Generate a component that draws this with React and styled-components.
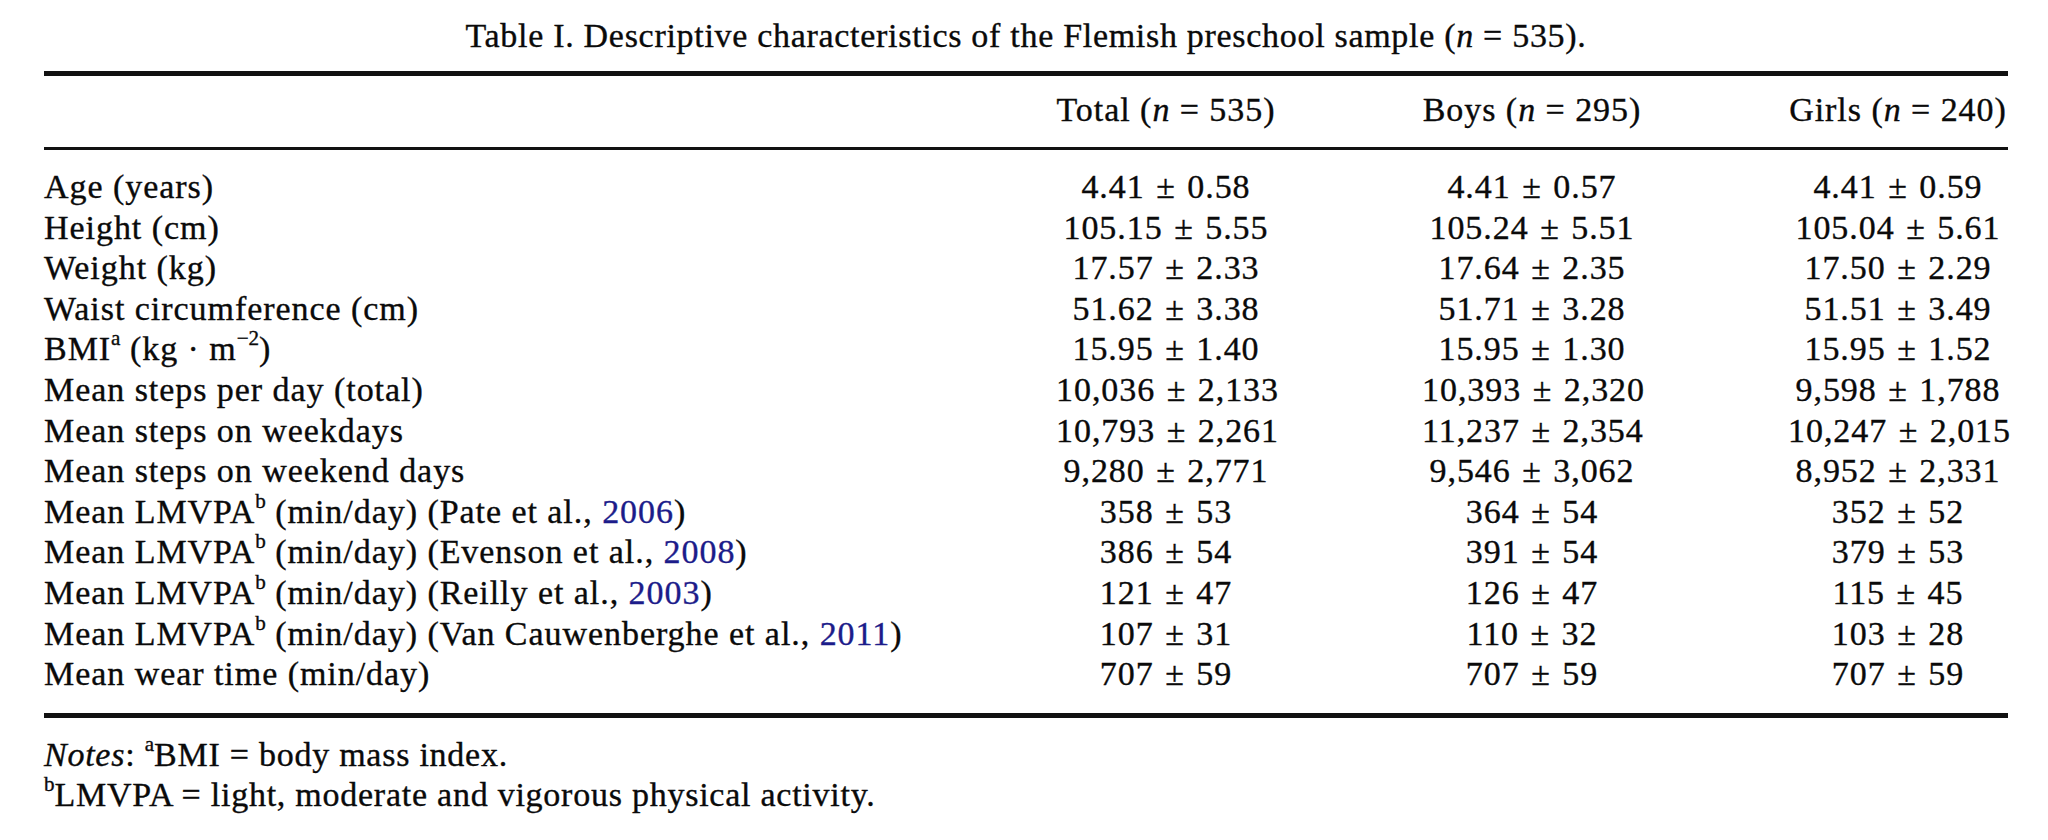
import styled, { createGlobalStyle } from 'styled-components';

const GlobalStyle = createGlobalStyle`
  html, body {
    margin: 0;
    padding: 0;
    background: #ffffff;
  }
  body {
    font-family: 'Liberation Serif', 'Times New Roman', serif;
    color: #0a0a0a;
    -webkit-text-stroke: 0.35px #0a0a0a;
  }
`;

const Page = styled.main`
  width: 2048px;
  box-sizing: border-box;
  padding: 16px 40px 0 44px;
  font-size: 34px;
  letter-spacing: 0.95px;
`;

const Caption = styled.h1`
  margin: 0 0 15px 0;
  font-size: 34px;
  font-weight: 400;
  line-height: 40px;
  letter-spacing: 0.7px;
  text-align: center;
  white-space: nowrap;
`;

const TableHead = styled.div`
  border-top: 5px solid #111;
  border-bottom: 3px solid #111;
  padding: 14px 0 17px 0;
`;

const TableBody = styled.div`
  border-bottom: 5px solid #111;
  padding: 17px 0 18px 0;
`;

const Row = styled.div`
  display: grid;
  grid-template-columns: 1fr 220px 220px 220px;
  column-gap: 146px;
  line-height: ${(p) => (p.$head ? '40px' : '40.6px')};
`;

const Label = styled.div`
  white-space: nowrap;
`;

const Value = styled.div`
  text-align: center;
  white-space: nowrap;
`;

const PlusMinus = styled.span`
  margin: 0 2px;
`;

const Sup = styled.sup`
  font-size: 0.62em;
  line-height: 0;
  vertical-align: 0.7em;
  letter-spacing: 0;
`;

const Year = styled.span`
  color: #1c1c8a;
  -webkit-text-stroke: 0.35px #1c1c8a;
`;

const Notes = styled.div`
  margin-top: 17px;
  line-height: 40px;
  letter-spacing: 0.75px;
`;

const lm = (who, year) => (
  <>
    Mean LMVPA<Sup>b</Sup> (min/day) ({who}, <Year>{year}</Year>)
  </>
);

const rows = [
  ['Age (years)', '4.41 ± 0.58', '4.41 ± 0.57', '4.41 ± 0.59'],
  ['Height (cm)', '105.15 ± 5.55', '105.24 ± 5.51', '105.04 ± 5.61'],
  ['Weight (kg)', '17.57 ± 2.33', '17.64 ± 2.35', '17.50 ± 2.29'],
  ['Waist circumference (cm)', '51.62 ± 3.38', '51.71 ± 3.28', '51.51 ± 3.49'],
  [
    <>
      BMI<Sup>a</Sup> (kg · m<Sup>−2</Sup>)
    </>,
    '15.95 ± 1.40',
    '15.95 ± 1.30',
    '15.95 ± 1.52',
  ],
  ['Mean steps per day (total)', '10,036 ± 2,133', '10,393 ± 2,320', '9,598 ± 1,788'],
  ['Mean steps on weekdays', '10,793 ± 2,261', '11,237 ± 2,354', '10,247 ± 2,015'],
  ['Mean steps on weekend days', '9,280 ± 2,771', '9,546 ± 3,062', '8,952 ± 2,331'],
  [lm('Pate et al.', '2006'), '358 ± 53', '364 ± 54', '352 ± 52'],
  [lm('Evenson et al.', '2008'), '386 ± 54', '391 ± 54', '379 ± 53'],
  [lm('Reilly et al.', '2003'), '121 ± 47', '126 ± 47', '115 ± 45'],
  [lm('Van Cauwenberghe et al.', '2011'), '107 ± 31', '110 ± 32', '103 ± 28'],
  ['Mean wear time (min/day)', '707 ± 59', '707 ± 59', '707 ± 59'],
];

const groups = [
  ['Total', '535'],
  ['Boys', '295'],
  ['Girls', '240'],
];

const Stat = ({ text }) => {
  const [mean, sd] = text.split(' ± ');
  return (
    <Value>
      {mean} <PlusMinus>±</PlusMinus> {sd}
    </Value>
  );
};

const App = () => {
  return (
    <Page>
      <GlobalStyle />
      <Caption>
        Table I. Descriptive characteristics of the Flemish preschool sample (<i>n</i> = 535).
      </Caption>
      <TableHead>
        <Row $head>
          <Label />
          {groups.map(([name, n]) => (
            <Value key={name}>
              {name} (<i>n</i> = {n})
            </Value>
          ))}
        </Row>
      </TableHead>
      <TableBody>
        {rows.map(([label, ...vals], i) => (
          <Row key={i}>
            <Label>{label}</Label>
            {vals.map((v, j) => (
              <Stat key={j} text={v} />
            ))}
          </Row>
        ))}
      </TableBody>
      <Notes>
        <div>
          <i>Notes</i>: <Sup>a</Sup>BMI = body mass index.
        </div>
        <div>
          <Sup>b</Sup>LMVPA = light, moderate and vigorous physical activity.
        </div>
      </Notes>
    </Page>
  );
};

export default App;
